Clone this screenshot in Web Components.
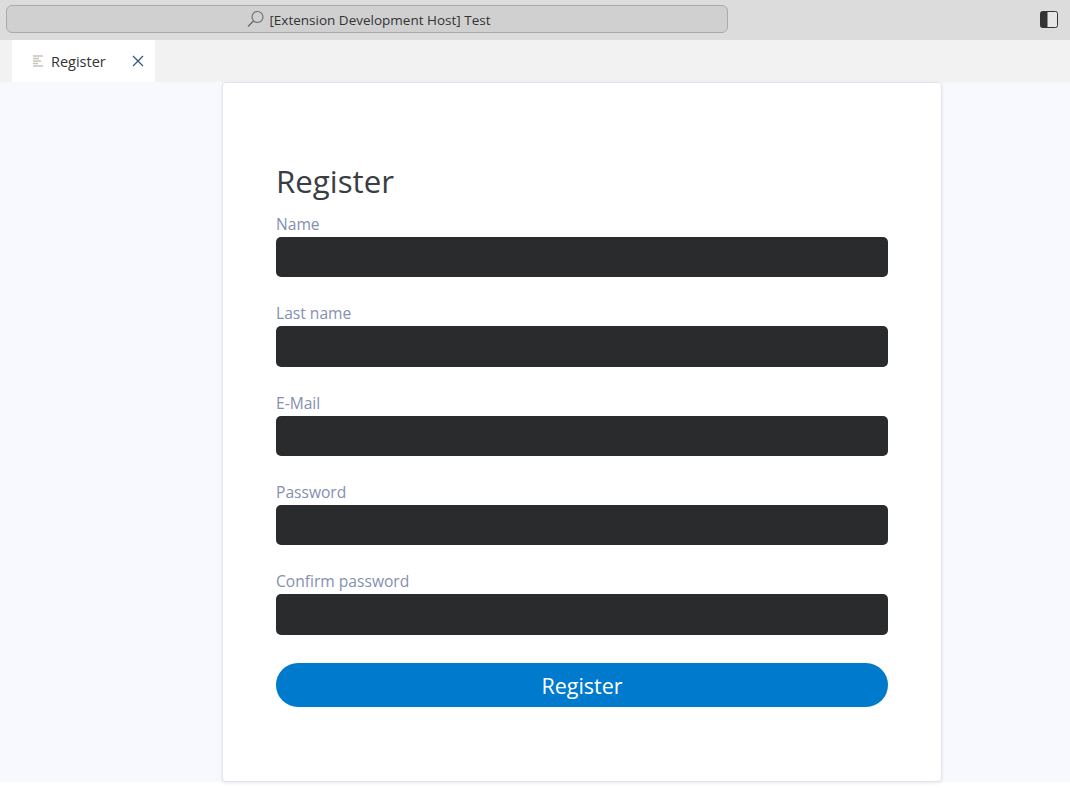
<!DOCTYPE html>
<html lang="en">
<head>
<meta charset="utf-8">
<title>Register</title>
<style>
  html, body {
    margin: 0;
    height: 100%;
    background: #ffffff;
    font-family: "Open Sans", sans-serif;
  }
</style>
</head>
<body>
<app-window>
  <title-bar slot="top">[Extension Development Host] Test</title-bar>
  <tab-strip slot="top">Register</tab-strip>
  <register-card heading="Register">
    <form-field label="Name"></form-field>
    <form-field label="Last name"></form-field>
    <form-field label="E-Mail"></form-field>
    <form-field label="Password"></form-field>
    <form-field label="Confirm password"></form-field>
    <pill-button>Register</pill-button>
  </register-card>
</app-window>

<script>
'use strict';

class AppWindow extends HTMLElement {
  constructor() {
    super();
    this.attachShadow({ mode: 'open' });
    this.shadowRoot.innerHTML = `
      <style>
        :host { display: block; width: 100%; height: 796px; overflow: hidden; }
        .content {
          display: flex;
          height: 700px;
          padding-left: 222px;
          background: #f8f9fe;
        }
      </style>
      <slot name="top"></slot>
      <div class="content"><slot></slot></div>
    `;
  }
}
customElements.define('app-window', AppWindow);

class TitleBar extends HTMLElement {
  constructor() {
    super();
    this.attachShadow({ mode: 'open' });
    this.shadowRoot.innerHTML = `
      <style>
        :host {
          box-sizing: border-box;
          display: flex;
          align-items: center;
          height: 40px;
          padding: 0 12px 2px 6px;
          background: #dcdcdc;
          font: 13.5px "Open Sans", sans-serif;
          color: #333333;
        }
        .search {
          box-sizing: border-box;
          display: flex;
          align-items: center;
          justify-content: center;
          gap: 4px;
          width: 722px;
          height: 28px;
          padding-left: 4px;
          border: 1px solid #ababab;
          border-radius: 6px;
          background: #d0d0d0;
        }
        svg { display: block; }
        .text { padding-top: 2px; }
        .layout { margin-left: auto; margin-top: 1px; }
      </style>
      <div class="search">
        <svg width="18" height="18" viewBox="0 0 18 18" fill="none" stroke="#6a6a6a" stroke-width="1.1">
          <circle cx="10.5" cy="7" r="5.5"></circle>
          <path d="M6.5 11 L1 16.5" stroke-width="1.4"></path>
        </svg>
        <span class="text"><slot></slot></span>
      </div>
      <svg class="layout" width="18" height="17" viewBox="0 0 18 17">
        <rect x="0.5" y="0.5" width="17" height="16" rx="2" fill="#e6e6e6" stroke="#333333"></rect>
        <path d="M2 0.5 H7.5 V16.5 H2 A1.5 1.5 0 0 1 0.5 15 V2 A1.5 1.5 0 0 1 2 0.5 Z" fill="#333333"></path>
      </svg>
    `;
  }
}
customElements.define('title-bar', TitleBar);

class TabStrip extends HTMLElement {
  constructor() {
    super();
    this.attachShadow({ mode: 'open' });
    this.shadowRoot.innerHTML = `
      <style>
        :host {
          display: block;
          height: 42px;
          padding-left: 12px;
          background: #f2f2f2;
          font: 14.5px "Open Sans", sans-serif;
          color: #333333;
        }
        .tab {
          box-sizing: border-box;
          display: flex;
          align-items: center;
          width: 143px;
          height: 42px;
          padding: 0 11px 0 21px;
          background: #ffffff;
        }
        .label { margin-left: 8px; }
        .close { margin-left: auto; display: block; }
      </style>
      <div class="tab">
        <svg width="10" height="12" viewBox="0 0 10 12" stroke="#c8c4bc" stroke-width="1.4">
          <path d="M0 1 H10 M0 3.5 H6 M0 6 H8 M0 8.5 H5 M0 11 H10"></path>
        </svg>
        <span class="label"><slot></slot></span>
        <svg class="close" width="12" height="12" viewBox="0 0 12 12" stroke="#2b5580" stroke-width="1.2">
          <path d="M1 1 L11 11 M11 1 L1 11"></path>
        </svg>
      </div>
    `;
  }
}
customElements.define('tab-strip', TabStrip);

class RegisterCard extends HTMLElement {
  constructor() {
    super();
    this.attachShadow({ mode: 'open' });
    this.shadowRoot.innerHTML = `
      <style>
        :host {
          box-sizing: border-box;
          display: block;
          width: 720px;
          height: 700px;
          padding: 0 53px;
          background: #ffffff;
          border: 1px solid #e4e4f0;
          border-radius: 4px;
          box-shadow: 0 1px 3px rgba(60, 60, 120, 0.12);
        }
        h1 {
          margin: 76px 0 9.1px;
          font: 400 31.25px/44px "Open Sans", sans-serif;
          color: #3a3e44;
        }
      </style>
      <h1></h1>
      <slot></slot>
    `;
  }

  connectedCallback() {
    this.shadowRoot.querySelector('h1').textContent = this.getAttribute('heading');
  }
}
customElements.define('register-card', RegisterCard);

class FormField extends HTMLElement {
  constructor() {
    super();
    this.attachShadow({ mode: 'open' });
    this.shadowRoot.innerHTML = `
      <style>
        :host { display: block; margin-bottom: 24px; }
        label {
          display: block;
          font: 15.6px/25px "Open Sans", sans-serif;
          color: #8590b0;
        }
        .input {
          height: 40.3px;
          border-radius: 5px;
          background: #2a2b2d;
        }
      </style>
      <label></label>
      <div class="input"></div>
    `;
  }

  connectedCallback() {
    this.shadowRoot.querySelector('label').textContent = this.getAttribute('label');
  }
}
customElements.define('form-field', FormField);

class PillButton extends HTMLElement {
  constructor() {
    super();
    this.attachShadow({ mode: 'open' });
    this.shadowRoot.innerHTML = `
      <style>
        :host {
          box-sizing: border-box;
          display: flex;
          align-items: center;
          justify-content: center;
          height: 44px;
          margin-top: 28.4px;
          padding-top: 2px;
          border-radius: 22px;
          background: #007acc;
          font: 21.5px "Open Sans", sans-serif;
          font-weight: 500;
          color: #ffffff;
        }
      </style>
      <slot></slot>
    `;
  }
}
customElements.define('pill-button', PillButton);
</script>
</body>
</html>
